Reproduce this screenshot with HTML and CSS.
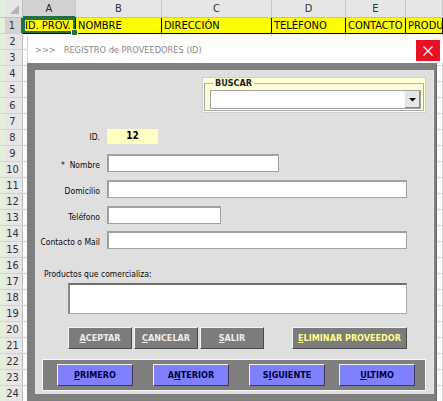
FILE: index.html
```html
<!DOCTYPE html>
<html>
<head>
<meta charset="utf-8">
<link rel="stylesheet" href="styles.css">
</head>
<body>
<div class="sheet">
  <div class="corner"></div>
  <div class="ch sel">A</div>
  <div class="ch">B</div>
  <div class="ch">C</div>
  <div class="ch">D</div>
  <div class="ch">E</div>
  <div class="ch"></div>

  <div class="rh rh-sel">1</div>
  <div class="y active">ID. PROV.</div>
  <div class="y">NOMBRE</div>
  <div class="y">DIRECCIÓN</div>
  <div class="y">TELÉFONO</div>
  <div class="y">CONTACTO</div>
  <div class="y">PRODU</div>

  <div class="rownums">
    <div class="rh">2</div><div class="rh">3</div><div class="rh">4</div><div class="rh">5</div>
    <div class="rh">6</div><div class="rh">7</div><div class="rh">8</div><div class="rh">9</div>
    <div class="rh">10</div><div class="rh">11</div><div class="rh">12</div><div class="rh">13</div>
    <div class="rh">14</div><div class="rh">15</div><div class="rh">16</div><div class="rh">17</div>
    <div class="rh">18</div><div class="rh">19</div><div class="rh">20</div><div class="rh">21</div>
    <div class="rh">22</div><div class="rh">23</div><div class="rh">24</div>
  </div>
  <div class="col"></div>
  <div class="col"></div>
  <div class="col"></div>
  <div class="col"></div>
  <div class="col"></div>
  <div class="col"></div>
</div>

<div class="dlg">
  <div class="titlebar">
    <span class="title">&gt;&gt;&gt;&nbsp;&nbsp;&nbsp;REGISTRO de PROVEEDORES (ID)</span>
    <div class="close">
      <svg width="10" height="10" viewBox="0 0 10 10"><path d="M0.5 0.5 L9.5 9.5 M9.5 0.5 L0.5 9.5" stroke="#fff" stroke-width="1.2"/></svg>
    </div>
  </div>
  <div class="frame">
    <div class="client">
      <div class="search-row">
        <div class="buscar">
          <fieldset class="group">
            <legend>BUSCAR</legend>
            <div class="combo">
              <div class="combo-text"></div>
              <div class="combo-btn">
                <svg width="7" height="5" viewBox="0 0 7 5"><path d="M0 1 H7 L3.5 4.5 Z" fill="#000"/></svg>
              </div>
            </div>
          </fieldset>
        </div>
      </div>

      <div class="form">
        <div class="row row-id">
          <div class="lbl">ID.</div>
          <div class="idbox">12</div>
        </div>
        <div class="row row-nombre">
          <div class="lbl">*&nbsp;&nbsp;Nombre</div>
          <div class="inp w-nombre"></div>
        </div>
        <div class="row row-dom">
          <div class="lbl">Domicilio</div>
          <div class="inp w-full"></div>
        </div>
        <div class="row row-tel">
          <div class="lbl">Teléfono</div>
          <div class="inp w-tel"></div>
        </div>
        <div class="row row-con">
          <div class="lbl">Contacto o Mail</div>
          <div class="inp w-full"></div>
        </div>
      </div>

      <div class="prod-lbl">Productos que comercializa:</div>
      <div class="prod-box"></div>

      <div class="actions">
        <div class="btn"><u>A</u>CEPTAR</div>
        <div class="btn"><u>C</u>ANCELAR</div>
        <div class="btn"><u>S</u>ALIR</div>
        <div class="btn btn-del"><u>E</u>LIMINAR PROVEEDOR</div>
      </div>

      <div class="nav">
        <div class="nbtn"><u>P</u>RIMERO</div>
        <div class="nbtn gap20">A<u>N</u>TERIOR</div>
        <div class="nbtn gap20">S<u>I</u>GUIENTE</div>
        <div class="nbtn gap14"><u>U</u>LTIMO</div>
      </div>
    </div>
  </div>
</div>
</body>
</html>
```

FILE: styles.css
```css
html, body {
  margin: 0;
  padding: 0;
}
body {
  width: 443px;
  height: 401px;
  overflow: hidden;
  position: relative;
  background: #fff;
  font-family: "DejaVu Sans Condensed", "DejaVu Sans", sans-serif;
}

/* ---------- spreadsheet ---------- */
.sheet {
  display: grid;
  grid-template-columns: 23px 53px 86px 110px 74px 60px 1fr;
  grid-template-rows: 18px 16px 1fr;
  width: 443px;
  height: 401px;
  box-sizing: border-box;
}
.corner {
  background: linear-gradient(to right, #e6eedc 0 5px, #e6e6e6 5px);
  border-right: 1px solid #bfbfbf;
  border-bottom: 1px solid #bfbfbf;
  position: relative;
}
.corner::after {
  content: "";
  position: absolute;
  right: 3px;
  bottom: 3px;
  border-left: 9px solid transparent;
  border-bottom: 9px solid #b4b4b4;
}
.ch {
  background: #e6e6e6;
  border-right: 1px solid #c8c8c8;
  border-bottom: 1px solid #bfbfbf;
  font-size: 11px;
  line-height: 18px;
  text-align: center;
  color: #333;
}
.ch.sel {
  background: #d2d2d2;
  border-bottom: 2px solid #217346;
  line-height: 17px;
  color: #222;
}
.rh {
  height: 16px;
  flex: none;
  box-sizing: border-box;
  background: linear-gradient(to right, #e6eedc 0 5px, #e6e6e6 5px);
  border-right: 1px solid #bfbfbf;
  border-bottom: 1px solid #d2d2d2;
  font-size: 11px;
  line-height: 16px;
  text-align: center;
  padding-left: 3px;
  color: #333;
}
.rh-sel {
  background: linear-gradient(to right, #e6eedc 0 5px, #d2d2d2 5px);
  border-right: 2px solid #217346;
}
.y {
  background: #ffff00;
  border-right: 1px solid #000;
  border-bottom: 1px solid #000;
  font-size: 11px;
  line-height: 16px;
  padding-left: 2px;
  white-space: nowrap;
  overflow: hidden;
  color: #000;
}
.active {
  position: relative;
  box-shadow: inset 0 0 0 2px #217346;
  overflow: visible;
}
.active::after {
  content: "";
  position: absolute;
  right: -3px;
  bottom: -3px;
  width: 5px;
  height: 5px;
  background: #217346;
  border: 1px solid #fff;
  z-index: 1;
}
.rownums {
  display: flex;
  flex-direction: column;
  overflow: hidden;
}
.col {
  border-right: 1px solid #d4d4d4;
  background: repeating-linear-gradient(to bottom, transparent 0 15px, #d4d4d4 15px 16px);
}

/* ---------- dialog ---------- */
.dlg {
  position: absolute;
  left: 27px;
  top: 36px;
  width: 416px;
  bottom: 0;
  display: flex;
  flex-direction: column;
  z-index: 2;
}
.titlebar {
  height: 27px;
  flex: none;
  background: #fff;
  border-left: 1px solid #d0d0d0;
  display: flex;
  align-items: flex-start;
}
.title {
  font-size: 9.2px;
  color: #888;
  margin: 8px 0 0 7px;
  white-space: nowrap;
}
.close {
  margin: 4px 3px 0 auto;
  width: 24px;
  height: 21px;
  background: #e81123;
  display: flex;
  align-items: center;
  justify-content: center;
}
.frame {
  flex: 1;
  width: 410px;
  box-sizing: border-box;
  background: #7f7f7f;
  padding: 7px 2px 0 8px;
  border-right: 1px solid #6b6b6b;
}
.client {
  height: 324px;
  background: #dfdfdf;
  border-right: 1px solid #ececec;
  box-sizing: border-box;
  font-size: 8.5px;
  color: #0a0a0a;
}

.search-row {
  display: flex;
  justify-content: flex-end;
  padding: 7px 7px 0 0;
}
.buscar {
  width: 224px;
  height: 36px;
  box-sizing: border-box;
  background: #ffffd6;
  border: 1px solid #cfcfcf;
  padding: 0 1px 0 1px;
}
.group {
  margin: 0;
  padding: 1px 2px 1px 5px;
  border: 1px solid #a9a9a9;
  border-top-color: #b4b4b4;
  min-width: 0;
}
.group legend {
  font-size: 9px;
  font-weight: bold;
  color: #222;
  padding: 0 2px;
  margin-left: 3px;
  line-height: 11px;
}
.combo {
  height: 19px;
  display: flex;
  background: #fff;
  border: 1px solid #a0a0a0;
  box-sizing: border-box;
}
.combo-text {
  flex: 1;
}
.combo-btn {
  width: 15px;
  background: #e6e6e6;
  border-left: 1px solid #f8f8f8;
  box-shadow: inset -1px -1px 0 #8a8a8a;
  display: flex;
  align-items: center;
  justify-content: center;
}

.form {
  margin-top: 16px;
  display: flex;
  flex-direction: column;
}
.row {
  display: flex;
  align-items: flex-end;
}
.lbl {
  width: 65px;
  margin-right: 7px;
  text-align: right;
  white-space: nowrap;
  line-height: 11px;
  padding-bottom: 1px;
}
.row-nombre { margin-top: 10px; }
.row-dom { margin-top: 8px; }
.row-tel { margin-top: 7.5px; }
.row-con { margin-top: 7.5px; }

.idbox {
  width: 51px;
  height: 15px;
  background: #ffffc4;
  font-size: 10px;
  font-weight: bold;
  text-align: center;
  line-height: 13px;
  color: #000;
}
.inp {
  height: 18px;
  box-sizing: border-box;
  background: #fff;
  border: 1px solid #a2a2a2;
  border-top: 2px solid #a0a0a0;
  border-left: 2px solid #a0a0a0;
}
.w-nombre { width: 172px; }
.w-full { width: 300px; }
.w-tel { width: 114px; }

.prod-lbl {
  margin: 20px 0 0 9px;
  line-height: 11px;
}
.prod-box {
  margin: 3px 0 0 33px;
  width: 339px;
  height: 31px;
  box-sizing: border-box;
  background: #fff;
  border: 1px solid #a8a8a8;
  border-top: 2px solid #6e6e6e;
  border-left: 2px solid #8a8a8a;
}

.actions {
  display: flex;
  margin: 13px 0 0 33px;
  gap: 2px;
}
.btn {
  width: 64px;
  height: 22px;
  box-sizing: border-box;
  background: #7c7c7c;
  border: 1px solid;
  border-color: #f4f4f4 #4a4a4a #4a4a4a #f4f4f4;
  font-weight: bold;
  font-size: 9px;
  color: #ececec;
  display: flex;
  align-items: center;
  justify-content: center;
}
.btn-del {
  width: 115px;
  margin-left: 26px;
  color: #ffff8c;
}

.nav {
  margin: 10px 0 0 7px;
  width: 384px;
  height: 32px;
  box-sizing: border-box;
  background: #7f7f7f;
  border: 1px solid #f6f6f6;
  display: flex;
  padding: 4px 0 0 14px;
}
.nbtn {
  width: 76px;
  height: 22px;
  box-sizing: border-box;
  background: #8080ff;
  border: 1px solid;
  border-color: #f0f0f0 #3a3a5a #3a3a5a #f0f0f0;
  font-weight: bold;
  font-size: 9px;
  color: #00003c;
  display: flex;
  align-items: center;
  justify-content: center;
}
.gap20 { margin-left: 20px; }
.gap14 { margin-left: 14px; }
```
